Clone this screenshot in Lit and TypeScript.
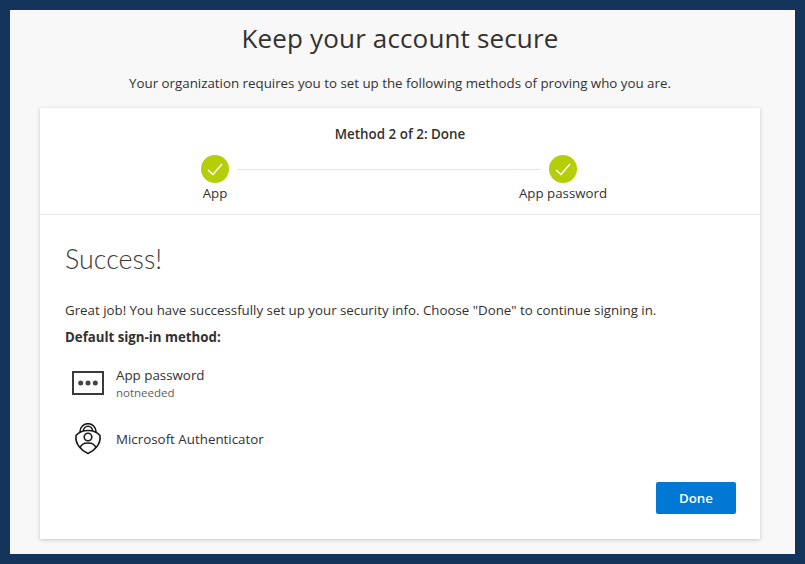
import { LitElement, html, css, svg } from "lit";
import { customElement } from "lit/decorators.js";

const check = svg`<svg class="check" width="28" height="28" viewBox="0 0 28 28"><circle cx="14" cy="14" r="14" fill="#b4cf0a"/><path d="M7 15 L12 19.5 L21 9" fill="none" stroke="#fff" stroke-width="1.5"/></svg>`;

@customElement("app-root")
export class AppRoot extends LitElement {
  static styles = css`
    :host {
      display: block;
      width: 805px;
      height: 564px;
      box-sizing: border-box;
      border: 10px solid #15345c;
      background: #f8f8f8;
      font-family: "Open Sans", "Noto Sans", sans-serif;
      color: #323130;
      font-size: 13.35px;
      overflow: hidden;
    }
    .page {
      display: flex;
      flex-direction: column;
      align-items: center;
      padding: 0 35px 0 30px;
    }
    h1 {
      margin: 10px 0 0;
      height: 36px;
      line-height: 36px;
      font-size: 26px;
      font-weight: 400;
      letter-spacing: 0.15px;
      color: #323130;
    }
    .intro {
      margin: 18px 0 0;
      height: 18px;
      line-height: 18px;
      font-size: 13.32px;
    }
    .card {
      margin-top: 16px;
      width: 720px;
      height: 431px;
      background: #fff;
      box-shadow: 0 1px 4px rgba(0, 0, 0, 0.2);
      display: flex;
      flex-direction: column;
    }
    .head {
      height: 106px;
      border-bottom: 1px solid #ebebeb;
      display: flex;
      flex-direction: column;
      align-items: center;
    }
    .method {
      margin-top: 17px;
      height: 18px;
      line-height: 18px;
      font-weight: 600;
      font-size: 13.4px;
    }
    .steps {
      margin: 12px 6px 0 0;
      width: 420px;
      display: grid;
      grid-template-columns: 56px 1fr 88px;
    }
    .step {
      display: flex;
      flex-direction: column;
      align-items: center;
      white-space: nowrap;
    }
    .check { display: block; }
    .label {
      height: 18px;
      line-height: 18px;
      margin-top: 1px;
      font-size: 13.3px;
    }
    .line {
      height: 1px;
      background: #e6e6e6;
      margin: 14px -22px 0 -6px;
    }
    .body {
      flex: 1;
      padding: 0 24px;
      display: flex;
      flex-direction: column;
    }
    h2 {
      margin: 25px 0 0;
      height: 38px;
      line-height: 38px;
      padding-left: 1px;
      font-family: Lato, "Open Sans", sans-serif;
      font-size: 26.8px;
      font-weight: 300;
      color: #3b3a39;
    }
    .msg {
      margin: 23px 0 0;
      height: 18px;
      line-height: 18px;
      padding-left: 1px;
      font-size: 13.3px;
      white-space: nowrap;
    }
    .def {
      margin: 9px 0 0;
      height: 18px;
      line-height: 18px;
      padding-left: 1px;
      font-weight: 700;
      font-size: 13.25px;
    }
    .row {
      display: grid;
      grid-template-columns: 52px 1fr;
      align-items: center;
      height: 36px;
    }
    .row.first { margin-top: 19px; }
    .row.second { margin-top: 20px; }
    .ico { display: flex; justify-content: center; padding-right: 4px; }
    .name { line-height: 18px; height: 18px; }
    .sub { line-height: 14px; height: 14px; font-size: 11.5px; color: #605e5c; margin-top: 2px; }
    .foot {
      display: flex;
      justify-content: flex-end;
      margin-top: 25px;
    }
    button {
      width: 80px;
      height: 32px;
      border: none;
      border-radius: 2px;
      background: #0078d4;
      color: #fff;
      font: 600 13.3px "Open Sans", "Noto Sans", sans-serif;
      padding: 0;
    }
  `;

  render() {
    return html`
      <div class="page">
        <h1>Keep your account secure</h1>
        <p class="intro">Your organization requires you to set up the following methods of proving who you are.</p>
        <section class="card">
          <div class="head">
            <div class="method">Method 2 of 2: Done</div>
            <div class="steps">
              <div class="step">${check}<span class="label">App</span></div>
              <div class="line"></div>
              <div class="step">${check}<span class="label">App password</span></div>
            </div>
          </div>
          <div class="body">
            <h2>Success!</h2>
            <p class="msg">Great job! You have successfully set up your security info. Choose "Done" to continue signing in.</p>
            <div class="def">Default sign-in method:</div>
            <div class="row first">
              <div class="ico">
                <svg width="32" height="24" viewBox="0 0 32 24"><rect x="1" y="1" width="30" height="22" fill="none" stroke="#3a3a3a" stroke-width="2"/><circle cx="8.7" cy="12" r="2.5" fill="#444"/><circle cx="16" cy="12" r="2.5" fill="#444"/><circle cx="23.3" cy="12" r="2.5" fill="#444"/></svg>
              </div>
              <div><div class="name">App password</div><div class="sub">notneeded</div></div>
            </div>
            <div class="row second">
              <div class="ico">
                <svg width="28" height="32" viewBox="0 0 28 32" fill="none" stroke="#1a1a1a" stroke-width="1.6">
                  <path d="M14 7.5 C19 7.5 23.5 9.5 26 12.5 C27 21 21 27.5 14 30.5 C7 27.5 1 21 2 12.5 C4.5 9.5 9 7.5 14 7.5 Z"/>
                  <path d="M6 10 V8.7 A8 8 0 0 1 22 8.7 V10"/>
                  <path d="M9.5 7.7 A4.5 4.5 0 0 1 18.5 7.7"/>
                  <circle cx="14" cy="14" r="3.8"/>
                  <path d="M6 25 C7 21.5 10 20 14 20 C18 20 21 21.5 22 25"/>
                </svg>
              </div>
              <div class="name">Microsoft Authenticator</div>
            </div>
            <div class="foot"><button>Done</button></div>
          </div>
        </section>
      </div>
    `;
  }
}
